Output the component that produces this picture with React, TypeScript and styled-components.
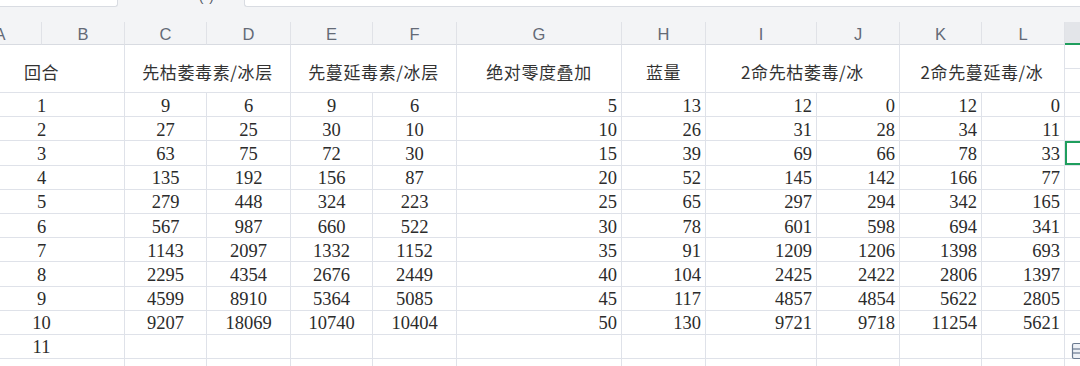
import React from 'react';
import styled, { createGlobalStyle } from 'styled-components';

const GlobalStyle = createGlobalStyle`
body {
  margin: 0;
  background: #ffffff;
  overflow: hidden;
}
`;

const COLS = [83, 83, 82, 84, 82, 84, 165, 84, 111, 83, 82, 83, 120];
const LETTERS = ['A', 'B', 'C', 'D', 'E', 'F', 'G', 'H', 'I', 'J', 'K', 'L', ''];
const template = COLS.map((w) => `${w}px`).join(' ');

const GRID = '#dfe2e9';
const GREEN = '#1f9e5d';

const Page = styled.div`
width: 1080px;
height: 366px;
overflow: hidden;
position: relative;
`;

const TopStrip = styled.div`
height: 22px;
background: #f3f4f6;
display: flex;
align-items: flex-start;
`;

const NameBox = styled.div`
width: 117px;
height: 6px;
background: #ffffff;
border: 1px solid #d9dce2;
border-top: none;
border-left: none;
border-bottom-right-radius: 3px;
`;

const FxArea = styled.div`
width: 126px;
height: 6px;
overflow: hidden;
display: flex;
justify-content: flex-end;
padding-right: 24px;
box-sizing: border-box;
`;

const FxText = styled.span`
font-family: "Liberation Sans", sans-serif;
font-size: 14px;
line-height: 14px;
color: #555b66;
margin-top: -11px;
letter-spacing: 6px;
`;

const FormulaBox = styled.div`
flex: 1;
height: 6px;
background: #ffffff;
border: 1px solid #d9dce2;
border-top: none;
border-right: none;
border-bottom-left-radius: 3px;
`;

const Sheet = styled.div`
margin-left: -41px;
display: grid;
grid-template-columns: ${template};
`;

const ColHead = styled.div<{ $active?: boolean }>`
height: 23px;
box-sizing: border-box;
display: flex;
align-items: center;
justify-content: center;
background: ${(p) => (p.$active ? '#e3e5e9' : '#f3f4f6')};
border-right: 1px solid ${(p) => (p.$active ? '#e3e5e9' : '#e0e2e7')};
border-bottom: ${(p) => (p.$active ? `2px solid ${GREEN}` : '1px solid #d8dbe1')};
font-family: "Liberation Sans", Arial, sans-serif;
font-size: 16.5px;
color: #646a76;
padding-top: 2px;
`;

const Body = styled.div`
grid-column: 1 / -1;
display: grid;
grid-template-columns: ${template};
grid-template-rows: 24px 24px repeat(11, 24.2px) 24px;
`;

const Cell = styled.div<{
  $span?: number;
  $rows?: number;
  $align?: 'center' | 'right';
  $title?: boolean;
  $selected?: boolean;
}>`
grid-column: span ${(p) => p.$span ?? 1};
grid-row: span ${(p) => p.$rows ?? 1};
box-sizing: border-box;
border-right: 1px solid ${GRID};
border-bottom: 1px solid ${GRID};
display: flex;
align-items: center;
justify-content: ${(p) => (p.$align === 'right' ? 'flex-end' : 'center')};
padding: ${(p) => (p.$align === 'right' ? '3px 4px 0 0' : '3px 0 0 0')};
white-space: nowrap;
overflow: hidden;
color: #2b2b2b;
font-family: ${(p) =>
  p.$title
    ? '"Noto Sans CJK SC", "Noto Sans", sans-serif'
    : '"Liberation Serif", "Times New Roman", serif'};
font-size: ${(p) => (p.$title ? '17px' : '18.5px')};
letter-spacing: ${(p) => (p.$title ? '0.6px' : '0')};
${(p) => (p.$title ? 'padding-top: 5px; color: #333333;' : '')}
${(p) => (p.$selected ? `box-shadow: inset 0 0 0 2px ${GREEN};` : '')}
`;

const PasteIcon = styled.svg`
position: absolute;
left: 1071px;
top: 342px;
`;

const titles: { text: string; span: number }[] = [
  { text: '回合', span: 2 },
  { text: '先枯萎毒素/冰层', span: 2 },
  { text: '先蔓延毒素/冰层', span: 2 },
  { text: '绝对零度叠加', span: 1 },
  { text: '蓝量', span: 1 },
  { text: '2命先枯萎毒/冰', span: 2 },
  { text: '2命先蔓延毒/冰', span: 2 },
];

const data: number[][] = [
  [9, 6, 9, 6, 5, 13, 12, 0, 12, 0],
  [27, 25, 30, 10, 10, 26, 31, 28, 34, 11],
  [63, 75, 72, 30, 15, 39, 69, 66, 78, 33],
  [135, 192, 156, 87, 20, 52, 145, 142, 166, 77],
  [279, 448, 324, 223, 25, 65, 297, 294, 342, 165],
  [567, 987, 660, 522, 30, 78, 601, 598, 694, 341],
  [1143, 2097, 1332, 1152, 35, 91, 1209, 1206, 1398, 693],
  [2295, 4354, 2676, 2449, 40, 104, 2425, 2422, 2806, 1397],
  [4599, 8910, 5364, 5085, 45, 117, 4857, 4854, 5622, 2805],
  [9207, 18069, 10740, 10404, 50, 130, 9721, 9718, 11254, 5621],
];

export default function App() {
  return (
    <Page>
      <GlobalStyle />
      <TopStrip>
        <NameBox />
        <FxArea>
          <FxText>()</FxText>
        </FxArea>
        <FormulaBox />
      </TopStrip>
      <Sheet>
        {LETTERS.map((l, i) => (
          <ColHead key={i} $active={i === LETTERS.length - 1}>
            {l}
          </ColHead>
        ))}
        <Body>
          {titles.map((t) => (
            <Cell key={t.text} $span={t.span} $rows={2} $title>
              {t.text}
            </Cell>
          ))}
          <Cell />
          <Cell style={{ gridColumn: 13 }} />
          {Array.from({ length: 12 }, (_, r) => {
            const row = data[r];
            return (
              <React.Fragment key={r}>
                <Cell $span={2}>{r < 11 ? r + 1 : ''}</Cell>
                {[0, 1, 2, 3].map((c) => (
                  <Cell key={c}>{row ? row[c] : ''}</Cell>
                ))}
                {[4, 5, 6, 7, 8, 9].map((c) => (
                  <Cell key={c} $align="right">
                    {row ? row[c] : ''}
                  </Cell>
                ))}
                <Cell $selected={r === 2} />
              </React.Fragment>
            );
          })}
        </Body>
      </Sheet>
      <PasteIcon width="12" height="18" viewBox="0 0 12 18">
        <rect x="1.5" y="1.5" width="12" height="15" rx="1.5" fill="#eef1f6" stroke="#6b7a90" strokeWidth="1.2" />
        <line x1="1.5" y1="7" x2="12" y2="7" stroke="#6b7a90" strokeWidth="1.2" />
        <line x1="1.5" y1="11" x2="12" y2="11" stroke="#6b7a90" strokeWidth="1.2" />
      </PasteIcon>
    </Page>
  );
}
